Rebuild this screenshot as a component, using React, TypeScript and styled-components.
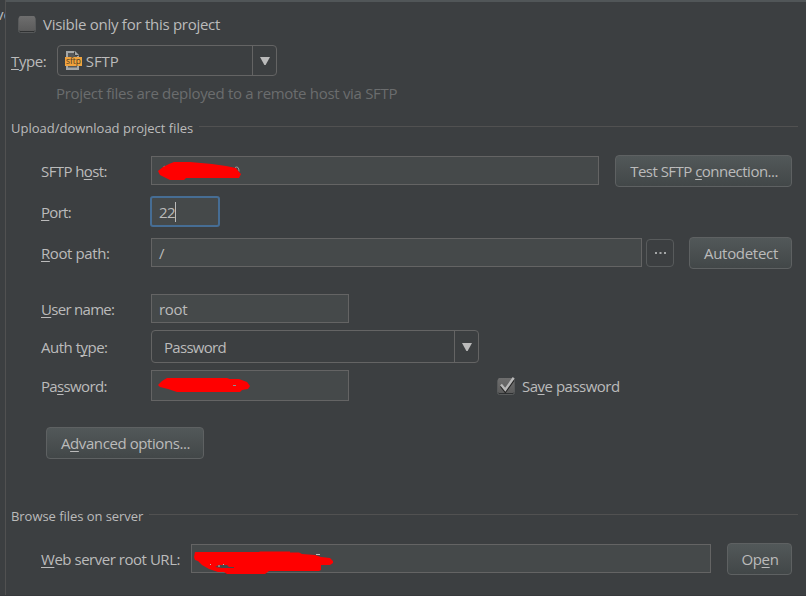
import React from 'react';
import styled, { createGlobalStyle } from 'styled-components';

const Global = createGlobalStyle`
  * { box-sizing: border-box; }
  html, body { margin: 0; background: #3c3f41; overflow: hidden; }
  body { font: 15px/20px "Open Sans", "Noto Sans", sans-serif; color: #bbbbbb; }
`;

const Window = styled.div`
  width: 806px;
  height: 596px;
  display: flex;
  background: #3c3f41;
  border-bottom: 1px solid #37393c;
`;

const Sidebar = styled.div`
  flex: none;
  width: 6px;
  border-right: 1px solid #515151;
  padding-top: 4px;
  overflow: hidden;
`;

const Panel = styled.main`
  flex: 1;
  min-width: 0;
  border-top: 2px solid #515658;
  padding: 6px 8px 0 5px;
`;

const Row = styled.div<{ $h: number; $mt?: number; $indent?: number }>`
  display: flex;
  align-items: center;
  height: ${p => p.$h}px;
  margin-top: ${p => p.$mt ?? 0}px;
  padding: 0 6px 0 ${p => p.$indent ?? 0}px;
`;

const Text = styled.span<{ $track?: number }>`
  flex: none;
  white-space: pre;
  letter-spacing: ${p => p.$track ?? 0}px;
`;

const SidebarText = styled(Text)`
  margin-left: -4px;
`;

const Label = styled(Text)<{ $w: number }>`
  width: ${p => p.$w}px;
`;

const Hint = styled(Text)`
  color: #6b6d6e;
`;

const Mnemonic = styled.span`
  text-decoration: underline;
  text-decoration-thickness: 1px;
  text-underline-offset: 2px;
  text-decoration-skip-ink: none;
`;

const SectionTitle = styled.h2<{ $mt: number }>`
  display: flex;
  align-items: center;
  height: 24px;
  margin: ${p => p.$mt}px 0 0;
  font-size: 13px;
  font-weight: 400;

  &::after {
    content: '';
    flex: 1;
    height: 1px;
    margin: 0 0 3px 6px;
    background: #515151;
  }
`;

const Field = styled.div<{ $w: number; $h?: number; $flush?: boolean }>`
  flex: none;
  align-self: flex-start;
  position: relative;
  display: flex;
  align-items: center;
  width: ${p => p.$w}px;
  height: ${p => p.$h ?? 29}px;
  margin-top: ${p => (p.$flush ? 0 : 1)}px;
  padding: 1px 7px 0;
  border: 1px solid #646464;
  background: #45494a;
`;

const FocusedField = styled(Field)`
  margin-left: -1px;
  padding-left: 7px;
  border: 2px solid #466d94;
  border-radius: 3px;
`;

const Caret = styled.span`
  width: 1px;
  height: 20px;
  background: #bbbbbb;
`;

const Combo = styled.div<{ $w: number; $h: number; $pad: number }>`
  flex: none;
  display: flex;
  align-items: center;
  width: ${p => p.$w}px;
  height: ${p => p.$h}px;
  padding-left: ${p => p.$pad}px;
  border: 1px solid #646464;
  border-radius: 4px;
`;

const ComboArrow = styled.span`
  display: flex;
  align-items: center;
  justify-content: center;
  align-self: stretch;
  width: 24px;
  margin-left: auto;
  border-left: 1px solid #646464;
`;

const Button = styled.button<{ $w: number; $ml?: number }>`
  flex: none;
  width: ${p => p.$w}px;
  height: 32px;
  margin-left: ${p => p.$ml ?? 0}px;
  padding: 0 0 0 1px;
  border: 1px solid #5e6162;
  border-radius: 4px;
  background: linear-gradient(#525859, #424748);
  color: #bbbbbb;
  font: inherit;
`;

const BrowseButton = styled(Button)`
  height: 28px;
  padding: 0;
  display: flex;
  align-items: center;
  justify-content: center;
  background: #3c3f41;
  border-color: #585b5c;
`;

const Check = styled.span<{ $ml: number; $gap: number }>`
  flex: none;
  display: flex;
  width: 18px;
  height: 18px;
  margin-top: 2px;
  margin-left: ${p => p.$ml}px;
  margin-right: ${p => p.$gap}px;
`;

const Scribble = styled.svg`
  position: absolute;
  overflow: visible;
  left: 0;
  top: 0;
`;

const Arrow = () => (
  <svg width="10" height="8" viewBox="0 0 10 8">
    <path d="M0 0H10L5.6 8H4.4Z" fill="#bbbbbb" />
  </svg>
);

const CheckBox = ({ checked, ml, gap }: { checked?: boolean; ml: number; gap: number }) => (
  <Check $ml={ml} $gap={gap}>
    <svg width="18" height="18" viewBox="0 0 18 18" overflow="visible">
      <defs>
        <linearGradient id="box" x2="0" y2="1">
          <stop stopColor="#6e6e6e" />
          <stop offset="1" stopColor="#5b5b5b" />
        </linearGradient>
      </defs>
      <rect x=".5" y="1" width="17" height="15.5" rx="2" fill="none" stroke="#585a5b" />
      <rect x="1" y="0" width="16" height="15" rx="1.5" fill="url(#box)" />
      <path d="M2 15.5H16" stroke="#2f3132" />
      {checked && (
        <>
          <path d="M4 8L8.3 13.4L16.5 2" fill="none" stroke="#242424" strokeWidth="2.4" />
          <path d="M4 6.5L8.3 11.7L16.7 -.2" fill="none" stroke="#b8b8b8" strokeWidth="2.4" />
        </>
      )}
    </svg>
  </Check>
);

const SftpIcon = () => (
  <svg width="17" height="20" viewBox="0 0 17 20">
    <path d="M1 0H10L14 4V19H1Z" fill="#a4a7a8" />
    <path d="M3 2H9V5H12V7H3ZM3 15H12V16.5H3Z" fill="#55585a" />
    <path d="M9.5 .5V4.5H13.5" fill="none" stroke="#3c3f41" />
    <rect y="6" width="17" height="9" fill="#f0a33e" />
    <text x="1" y="13" fontSize="9" textLength="15" lengthAdjust="spacingAndGlyphs" fill="#4b3a22" fontFamily="Open Sans">sftp</text>
  </svg>
);

export default function App() {
  return (
    <>
      <Global />
      <Window>
        <Sidebar><SidebarText>ve</SidebarText></Sidebar>
        <Panel>
          <Row $h={32}>
            <CheckBox ml={7} gap={7} />
            <Text $track={-0.27}>Visible only for this project</Text>
          </Row>
          <Row $h={31} $mt={5}>
            <Label $w={46} $track={-0.4}><Mnemonic>T</Mnemonic>ype:</Label>
            <Combo $w={220} $h={31} $pad={7}>
              <SftpIcon />
              <Text $track={-0.1}>{' SFTP'}</Text>
              <ComboArrow><Arrow /></ComboArrow>
            </Combo>
          </Row>
          <Row $h={28} $mt={3} $indent={45}>
            <Hint $track={-0.31}>Project files are deployed to a remote host via SFTP</Hint>
          </Row>

          <SectionTitle $mt={9}><Text>Upload/download project files</Text></SectionTitle>
          <Row $h={32} $mt={15} $indent={30}>
            <Label $w={110} $track={-0.6}>SFTP h<Mnemonic>o</Mnemonic>st:</Label>
            <Field $w={448}>
              <Scribble width="100" height="29">
                <path d="M11 10.5l2-1.5M83 10.5q4-2 4 4" stroke="#999" fill="none" />
                <path d="M6 14L11 10L17 7L22 5H38L60 7L74 9L84 11L87 15L89 17L87 21H34L32 23H18L8 18Z" fill="#f00" />
              </Scribble>
            </Field>
            <Button $w={177} $ml={16}><Text $track={-0.52}>Test SFTP <Mnemonic>c</Mnemonic>onnection...</Text></Button>
          </Row>
          <Row $h={31} $mt={9} $indent={30}>
            <Label $w={110} $track={-0.7}><Mnemonic>P</Mnemonic>ort:</Label>
            <FocusedField $w={70} $h={31} $flush><Text $track={-0.7}>22</Text><Caret /></FocusedField>
          </Row>
          <Row $h={32} $mt={10} $indent={30}>
            <Label $w={110} $track={-0.4}><Mnemonic>R</Mnemonic>oot path:</Label>
            <Field $w={491}><Text>/</Text></Field>
            <BrowseButton $w={28} $ml={4}>
              <svg width="11" height="3"><path d="M0 0h2v2H0zM4.5 0h2v2h-2zM9 0h2v2H9z" fill="#a5a7a8" /></svg>
            </BrowseButton>
            <Button $w={103} $ml={15}><Text $track={-0.3}>Autodetect</Text></Button>
          </Row>

          <Row $h={32} $mt={24} $indent={30}>
            <Label $w={110} $track={-0.7}><Mnemonic>U</Mnemonic>ser name:</Label>
            <Field $w={198}><Text $track={-0.3}>root</Text></Field>
          </Row>
          <Row $h={33} $mt={5} $indent={30}>
            <Label $w={110} $track={-0.5}>Auth t<Mnemonic>y</Mnemonic>pe:</Label>
            <Combo $w={328} $h={33} $pad={12}>
              <Text $track={-0.7}>Password</Text>
              <ComboArrow><Arrow /></ComboArrow>
            </Combo>
          </Row>
          <Row $h={31} $mt={7} $indent={30}>
            <Label $w={110} $track={-0.65}>Pa<Mnemonic>s</Mnemonic>sword:</Label>
            <Field $w={198} $h={31} $flush>
              <Scribble width="110" height="31">
                <path d="M6 14L10 10L15 7H75L78 8H87L95 11L98 15L96 18L90 19L88 21H25L16 18L8 16Z" fill="#f00" />
                <path d="M81 14.5h3" stroke="#8c9092" />
              </Scribble>
            </Field>
            <CheckBox checked ml={148} gap={7} />
            <Text $track={-0.5}>Sa<Mnemonic>v</Mnemonic>e password</Text>
          </Row>
          <Row $h={32} $mt={26} $indent={35}>
            <Button $w={158}><Text $track={-0.42}>A<Mnemonic>d</Mnemonic>vanced options...</Text></Button>
          </Row>

          <SectionTitle $mt={45}><Text $track={-0.05}>Browse files on server</Text></SectionTitle>
          <Row $h={32} $mt={15} $indent={30}>
            <Label $w={150} $track={-0.47}><Mnemonic>W</Mnemonic>eb server root URL:</Label>
            <Field $w={520}>
              <Scribble width="150" height="29">
                <path d="M124 9.5h4" stroke="#bbb" />
                <path d="M3 7H67L68 6.5H98V7.5H107L110 9L123 10L129 12L138 13L141 16V18L138 20H129V25L127 26H77L73 29L69 29H35L32 27H26L17 24L10 20L6 16L3 15L2 12Z" fill="#f00" />
                <path d="M23 22L27 20H35L37 22H42V23H30Z" fill="#45494a" />
                <path d="M18 19.5h1M31 19.5h1M26 21h2" stroke="#bbb" />
              </Scribble>
            </Field>
            <Button $w={65} $ml={16}><Text $track={-0.35}>Op<Mnemonic>e</Mnemonic>n</Text></Button>
          </Row>
        </Panel>
      </Window>
    </>
  );
}
